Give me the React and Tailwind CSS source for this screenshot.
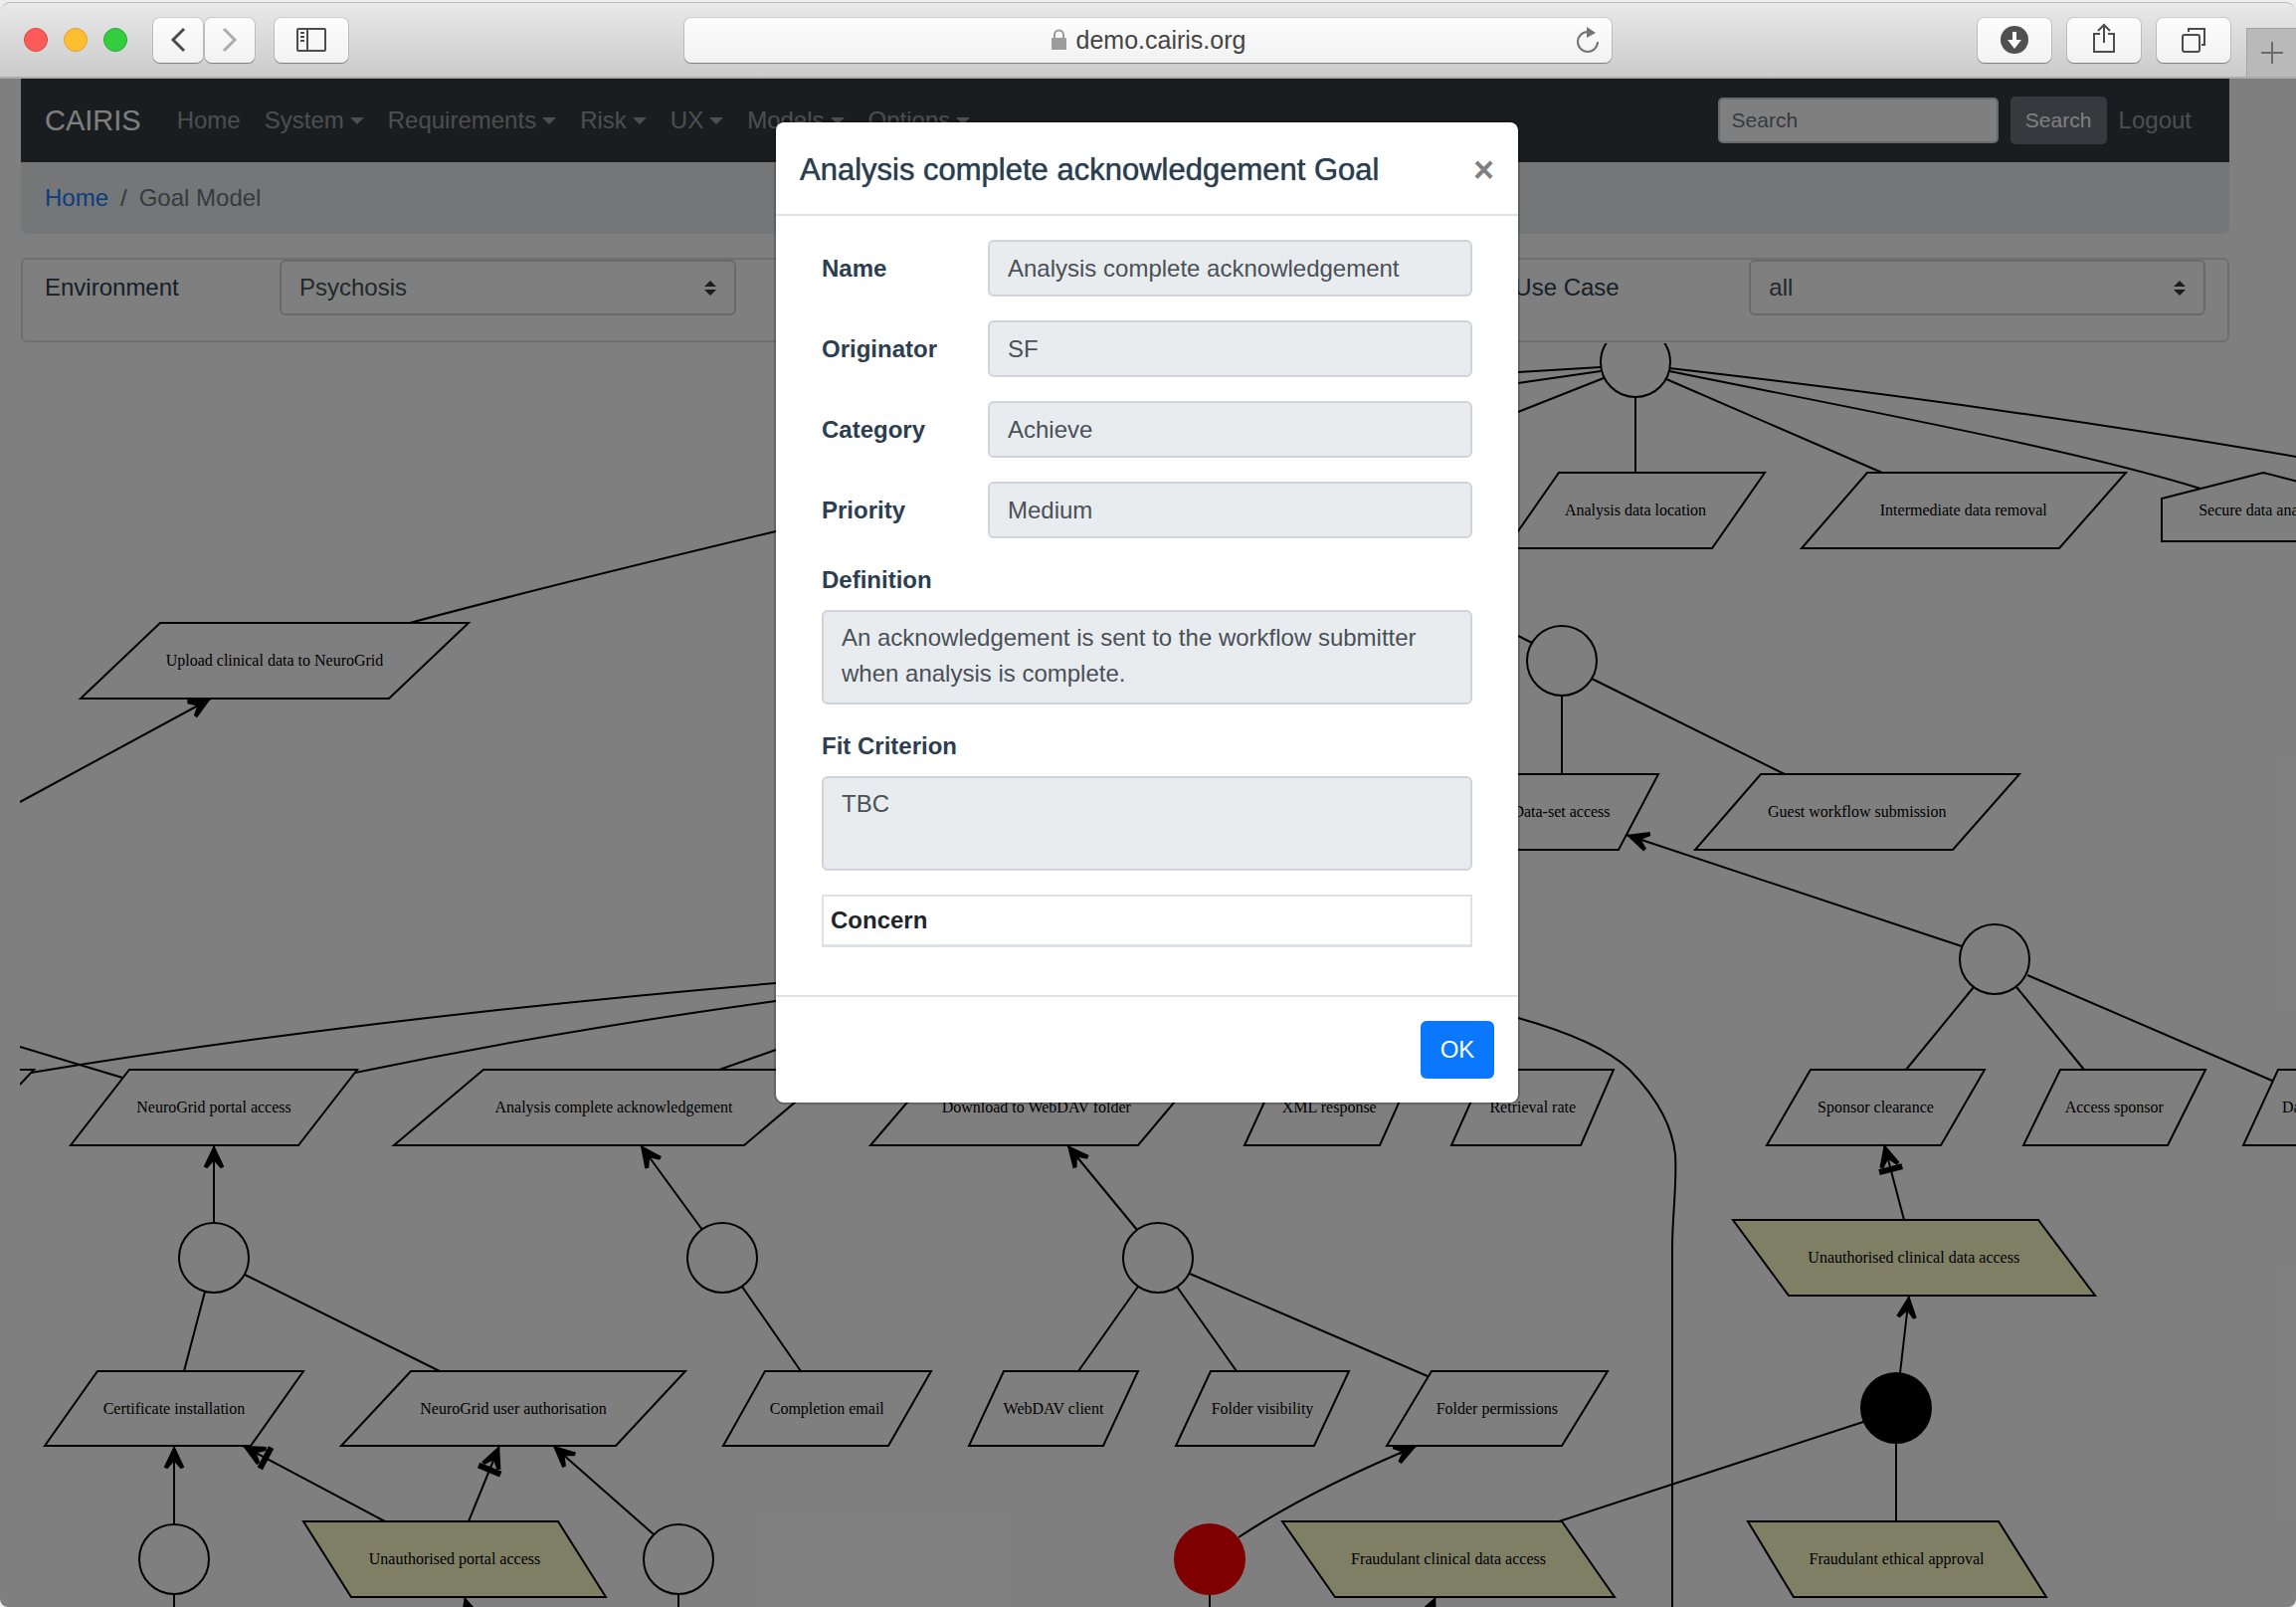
import React from "react";

const SANS = "font-['Liberation_Sans',Arial,sans-serif]";

/* ---------- browser chrome ---------- */

const chromeButton =
  "flex h-[45px] items-center justify-center rounded-[7px] bg-linear-to-b from-[#fdfdfd] to-[#f2f2f2] shadow-[0_1px_1px_#00000055,0_0_0_1px_#0000001c]";

function BrowserBar() {
  return (
    <header className="flex h-[77px] items-stretch rounded-t-[10px] border-t border-b-2 border-t-[#bcbcbc] border-b-[#acacac] bg-linear-to-b from-[#e9e9e9] to-[#cbcbcb]">
      <div className="flex flex-1 items-center">
        <div className="ml-6 flex gap-4">
          <span className="size-6 rounded-full border border-[#e0443e] bg-[#fd5b58]" />
          <span className="size-6 rounded-full border border-[#dea034] bg-[#febe30]" />
          <span className="size-6 rounded-full border border-[#27a935] bg-[#35cd40]" />
        </div>
        <div className="ml-[26px] flex gap-[2px]">
          <button aria-label="Back" className={`${chromeButton} w-[50px]`}>
            <svg width="18" height="28" viewBox="0 0 18 28" fill="none" stroke="#4c4c4c" strokeWidth="3">
              <path d="M15 3 4 14l11 11" />
            </svg>
          </button>
          <button aria-label="Forward" className={`${chromeButton} w-[50px]`}>
            <svg width="18" height="28" viewBox="0 0 18 28" fill="none" stroke="#acacac" strokeWidth="3">
              <path d="M3 3l11 11L3 25" />
            </svg>
          </button>
        </div>
        <button aria-label="Sidebar" className={`${chromeButton} ml-5 w-[74px]`}>
          <svg width="30" height="24" viewBox="0 0 30 24" fill="none" stroke="#4c4c4c" strokeWidth="2">
            <rect x="1" y="1" width="28" height="22" rx="1" />
            <path d="M11 1v22M4 5h4M4 9h4M4 13h4" />
          </svg>
        </button>
      </div>
      <div className={`${chromeButton} relative w-[932px] self-center`}>
        <svg className="mr-[9px]" width="17" height="22" viewBox="0 0 17 22">
          <path d="M4 10V6a4.500 4.500 0 0 1 9 0v4" fill="none" stroke="#9b9b9b" strokeWidth="2" />
          <rect x="1" y="9" width="15" height="12" rx="1" fill="#9b9b9b" />
        </svg>
        <span className="text-[25px] leading-9 text-[#454545]">demo.cairis.org</span>
        <button aria-label="Reload" className="absolute right-3">
          <svg width="24" height="28" viewBox="0 0 24 28" fill="none" stroke="#747474" strokeWidth="2">
            <path d="M12 6a10 10 0 1 0 10 10" />
            <path d="M11 1l9 6-9 5z" fill="#747474" stroke="none" />
          </svg>
        </button>
      </div>
      <div className="flex flex-1 items-center justify-end gap-4">
        <button aria-label="Downloads" className={`${chromeButton} w-[74px]`}>
          <svg width="28" height="28" viewBox="0 0 28 28">
            <circle cx="14" cy="14" r="14" fill="#505050" />
            <path d="M12 6h4v8h5l-7 9-7-9h5z" fill="#fafafa" />
          </svg>
        </button>
        <button aria-label="Share" className={`${chromeButton} w-[74px]`}>
          <svg className="mb-1" width="24" height="32" viewBox="0 0 24 32" fill="none" stroke="#4c4c4c" strokeWidth="2">
            <path d="M8 12H2v18h20V12h-6M12 21V3M6 9l6-6 6 6" />
          </svg>
        </button>
        <button aria-label="Tabs" className={`${chromeButton} w-[74px]`}>
          <svg width="26" height="26" viewBox="0 0 26 26" fill="none" stroke="#4c4c4c" strokeWidth="2">
            <rect x="2" y="8" width="17" height="17" rx="2" />
            <path d="M8 5V2h16v16h-3" />
          </svg>
        </button>
        <button
          aria-label="New tab"
          className="flex h-[49px] w-[50px] items-center justify-center self-end border-t border-l border-[#a3a3a3] bg-[#b9b9b9]"
        >
          <svg width="22" height="22" viewBox="0 0 22 22" stroke="#6a6a6a" strokeWidth="2">
            <path d="M11 0v22M0 11h22" />
          </svg>
        </button>
      </div>
    </header>
  );
}

/* ---------- page ---------- */

function NavBar() {
  const menus = ["System", "Requirements", "Risk", "UX", "Models", "Options"];
  return (
    <nav className="flex h-[84px] items-center bg-[#343a40] pr-[26px] pl-6 text-2xl text-white/50">
      <a href="#" className="mr-6 text-[29px] text-white">
        CAIRIS
      </a>
      <a href="#" className="px-3">
        Home
      </a>
      {menus.map((m) => (
        <button key={m} className="flex items-center px-3">
          {m}
          <span className="ml-[6px] border-x-[7px] border-t-[7px] border-x-transparent border-t-white/50" />
        </button>
      ))}
      <form className="ml-auto flex items-center gap-3" onSubmit={(e) => e.preventDefault()}>
        <input
          type="search"
          aria-label="Search"
          placeholder="Search"
          className="h-[46px] w-[282px] rounded-[5px] border-2 border-[#ced4da] bg-white px-3 text-[21px] placeholder:text-[#6c757d]"
        />
        <button className="h-12 w-[97px] rounded-[5px] bg-[#6c757d] text-[21px] text-white">Search</button>
      </form>
      <a href="#" className="px-3">
        Logout
      </a>
    </nav>
  );
}

function Breadcrumb() {
  return (
    <div className="mb-6 flex h-[72px] items-center gap-3 rounded-b-md bg-[#e9ecef] px-6 text-2xl text-[#6c757d]">
      <a href="#" className="text-[#1478ff]">
        Home
      </a>
      <span>/</span>
      <span>Goal Model</span>
    </div>
  );
}

function Filter({ id, label, value, className = "" }) {
  return (
    <div className={`flex items-start px-[22px] ${className}`}>
      <label htmlFor={id} className="mt-[10px] w-[236px] shrink-0 text-2xl leading-9">
        {label}
      </label>
      <div className="relative flex-1">
        <select
          id={id}
          defaultValue={value}
          className="h-14 w-full appearance-none rounded-md border-2 border-[#ced4da] bg-white pl-[18px] text-2xl text-[#495057]"
        >
          <option>{value}</option>
        </select>
        <svg className="pointer-events-none absolute top-[21px] right-[19px]" width="14" height="15" viewBox="0 0 14 15" fill="#343a40">
          <path d="M7 0l6 6H1zM7 15l6-6H1z" />
        </svg>
      </div>
    </div>
  );
}

/* ---------- goal model ---------- */

// x holds the top-left, top-right, bottom-right and bottom-left corners; ob marks an obstacle
const nodes = [
  { t: "Analysis data location", y: 475, h: 76, x: [1567, 1774, 1721, 1514] },
  { t: "Intermediate data removal", y: 475, h: 76, x: [1877, 2137, 2070, 1811] },
  { t: "Upload clinical data to NeuroGrid", y: 626, h: 76, x: [161, 471, 391, 81] },
  { t: "Data-set access", y: 778, h: 76, x: [1512, 1667, 1627, 1472] },
  { t: "Guest workflow submission", y: 778, h: 76, x: [1770, 2030, 1963, 1704] },
  { t: "NeuroGrid portal access", y: 1075, h: 76, x: [130, 359, 300, 71] },
  { t: "Analysis complete acknowledgement", y: 1075, h: 76, x: [486, 838, 748, 396] },
  { t: "Download to WebDAV folder", y: 1075, h: 76, x: [940, 1208, 1144, 875] },
  { t: "XML response", y: 1075, h: 76, x: [1286, 1421, 1387, 1251] },
  { t: "Retrieval rate", y: 1075, h: 76, x: [1493, 1622, 1589, 1459] },
  { t: "Sponsor clearance", y: 1075, h: 76, x: [1820, 1995, 1951, 1776] },
  { t: "Access sponsor", y: 1075, h: 76, x: [2071, 2217, 2179, 2034] },
  { t: "Unauthorised clinical data access", y: 1226, h: 76, x: [1742, 2049, 2106, 1798], ob: true },
  { t: "Certificate installation", y: 1378, h: 75, x: [98, 305, 252, 45] },
  { t: "NeuroGrid user authorisation", y: 1378, h: 75, x: [413, 689, 619, 343] },
  { t: "Completion email", y: 1378, h: 75, x: [769, 936, 893, 727] },
  { t: "WebDAV client", y: 1378, h: 75, x: [1009, 1144, 1109, 974] },
  { t: "Folder visibility", y: 1378, h: 75, x: [1217, 1356, 1321, 1182] },
  { t: "Folder permissions", y: 1378, h: 75, x: [1439, 1616, 1570, 1394] },
  { t: "Unauthorised portal access", y: 1529, h: 76, x: [305, 561, 609, 353], ob: true },
  { t: "Fraudulant clinical data access", y: 1529, h: 76, x: [1289, 1570, 1623, 1342], ob: true },
  { t: "Fraudulant ethical approval", y: 1529, h: 76, x: [1757, 2009, 2057, 1803], ob: true },
];

const circles = [
  [1644, 364],
  [1570, 664],
  [2005, 964],
  [215, 1264],
  [726, 1264],
  [1164, 1264],
  [175, 1567],
  [682, 1567],
];

const edges = [
  "M1609 369L1526 374",
  "M1609 373L1526 385",
  "M1612 380L1526 414",
  "M1644 400V475",
  "M1675 381L1892 475",
  "M1678 373C1850 408 2080 450 2212 491",
  "M1678 370Q2010 408 2308 459",
  "M1526 639L1540 646",
  "M1570 700V778",
  "M1600 682L1794 778",
  "M1984 992L1916 1075",
  "M2027 992L2095 1075",
  "M2038 980L2284 1086",
  "M412 626Q530 594 780 534",
  "M20 1052L123 1083",
  "M31 1078Q360 1024 780 988",
  "M357 1078Q560 1036 780 1006",
  "M723 1075L780 1055",
  "M1526 1023C1565 1034 1612 1050 1638 1075C1670 1108 1681 1135 1684 1160C1686 1190 1681 1220 1681 1255V1615",
  "M206 1298L185 1378",
  "M246 1281L442 1378",
  "M746 1293L805 1378",
  "M1144 1293L1084 1378",
  "M1183 1293L1243 1378",
  "M1196 1280L1435 1383",
  "M1873 1429L1567 1529",
  "M1906 1450V1529",
  "M175 1602V1615",
  "M682 1602V1615",
  "M1216 1602V1615",
  "M1245 1545Q1310 1502 1408 1460",
  "M20 1075H34L20 1090",
];

// a is the tail, b the tip
const arrows = [
  { a: [20, 806], b: [212, 702] },
  { a: [1972, 951], b: [1635, 839] },
  { a: [215, 1229], b: [215, 1151] },
  { a: [706, 1236], b: [644, 1151] },
  { a: [1143, 1236], b: [1073, 1151] },
  { a: [175, 1532], b: [175, 1453] },
  { a: [657, 1542], b: [556, 1453] },
  { a: [1910, 1380], b: [1919, 1302] },
  { a: [1406, 1461], b: [1424, 1453] },
  { a: [480, 1650], b: [467, 1605] },
  { a: [1424, 1650], b: [1443, 1605] },
  { a: [387, 1529], b: [244, 1453], bar: true },
  { a: [471, 1529], b: [502, 1453], bar: true },
  { a: [1914, 1226], b: [1894, 1150], bar: true },
];

function Arrow({ a, b, bar }) {
  const angle = (Math.atan2(b[1] - a[1], b[0] - a[0]) * 180) / Math.PI + 90;
  return (
    <g>
      <path d={`M${a[0]} ${a[1]}L${b[0]} ${b[1]}`} />
      <g transform={`translate(${b[0]} ${b[1]}) rotate(${angle})`}>
        <path d="M0 2L9 21L7 22L0 14L-7 22L-9 21Z" fill="#000" />
        {bar && <path d="M-11 24H11V28H-11Z" fill="#000" />}
      </g>
    </g>
  );
}

function GoalModel() {
  return (
    <svg
      role="img"
      aria-label="Goal model"
      viewBox="20 345 2288 1270"
      className="block h-auto w-full font-['Liberation_Serif','Times_New_Roman',serif] text-base"
      fill="none"
      stroke="#000"
      strokeWidth="2"
    >
      {edges.map((d) => (
        <path key={d} d={d} />
      ))}
      {circles.map(([cx, cy]) => (
        <circle key={`${cx}-${cy}`} cx={cx} cy={cy} r="35" />
      ))}
      <circle cx="1216" cy="1567" r="35" fill="#f00" stroke="#f00" />
      <circle cx="1906" cy="1415" r="35" fill="#000" />
      {nodes.map(({ t, y, h, x, ob }) => (
        <g key={t}>
          <polygon
            points={`${x[0]},${y} ${x[1]},${y} ${x[2]},${y + h} ${x[3]},${y + h}`}
            fill={ob ? "#ffffcc" : "none"}
          />
          <text x={(x[0] + x[1] + x[2] + x[3]) / 4} y={y + 43} textAnchor="middle" fill="#000" stroke="none">
            {t}
          </text>
        </g>
      ))}
      <path d="M2173 544V501L2275 475L2377 501V544Z" />
      <text x="2275" y="518" textAnchor="middle" fill="#000" stroke="none">
        Secure data analysis
      </text>
      <path d="M2308 1075H2290L2255 1151H2308" />
      <text x="2294" y="1118" fill="#000" stroke="none">
        Data
      </text>
      {arrows.map((p) => (
        <Arrow key={p.b.join("-")} {...p} />
      ))}
    </svg>
  );
}

/* ---------- dialog ---------- */

const field =
  "w-full rounded-md border-2 border-[#ced4da] bg-[#e9ecef] px-[18px] text-2xl leading-9 text-[#495057]";

function Row({ id, label, value }) {
  return (
    <div className="flex items-center">
      <label htmlFor={id} className="w-[167px] shrink-0 font-bold">
        {label}
      </label>
      <input id={id} readOnly value={value} className={`${field} h-[57px]`} />
    </div>
  );
}

function Area({ id, label, value }) {
  return (
    <div className="flex flex-col gap-3">
      <label htmlFor={id} className="font-bold">
        {label}
      </label>
      <textarea id={id} readOnly rows={2} value={value} className={`${field} h-[95px] resize-none overflow-hidden py-2`} />
    </div>
  );
}

function GoalDialog() {
  return (
    <section
      role="dialog"
      aria-labelledby="dialog-title"
      className="w-[746px] rounded-lg bg-white text-2xl leading-9 shadow-[0_0_0_2px_#00000033]"
    >
      <div className="flex h-[94px] items-center justify-between border-b-2 border-[#dee2e6] px-6 pt-[3px]">
        <h5 id="dialog-title" className="text-[31px] [text-shadow:0_0_1px_currentColor]">
          Analysis complete acknowledgement Goal
        </h5>
        <button aria-label="Close" className="text-4xl font-bold text-black/50">
          ×
        </button>
      </div>
      <div className="flex flex-col gap-6 px-[46px] pt-6 pb-12">
        <Row id="name" label="Name" value="Analysis complete acknowledgement" />
        <Row id="originator" label="Originator" value="SF" />
        <Row id="category" label="Category" value="Achieve" />
        <Row id="priority" label="Priority" value="Medium" />
        <Area
          id="definition"
          label="Definition"
          value="An acknowledgement is sent to the workflow submitter when analysis is complete."
        />
        <Area id="fit" label="Fit Criterion" value="TBC" />
        <table className="w-full border-separate border-spacing-0 border-2 border-b-[3px] border-[#dee2e6] text-left text-[#212529]">
          <thead>
            <tr>
              <th scope="col" className="px-[7px] py-[6px]">
                Concern
              </th>
            </tr>
          </thead>
        </table>
      </div>
      <div className="flex justify-end border-t-2 border-[#dee2e6] p-6">
        <button className="h-[58px] w-[74px] rounded-md bg-[#0a77ff] text-white">OK</button>
      </div>
    </section>
  );
}

export default function App() {
  return (
    <div className={`${SANS} bg-[#eeeeee] pt-0.5 text-[#2c3e50]`}>
      <BrowserBar />
      <main className="relative overflow-hidden rounded-b-[8px] bg-white">
        <div className="mr-[67px] ml-[21px]">
          <NavBar />
          <Breadcrumb />
          <div className="mb-px grid grid-cols-3 rounded-md border-2 border-black/[.125] pb-[25px]">
            <Filter id="environment" label="Environment" value="Psychosis" />
            <Filter id="use-case" label="Use Case" value="all" className="col-start-3" />
          </div>
        </div>
        <div className="ml-5">
          <GoalModel />
        </div>
        <div className="absolute inset-0 flex items-start justify-center bg-black/50 pt-11 pr-0.5">
          <GoalDialog />
        </div>
      </main>
    </div>
  );
}
